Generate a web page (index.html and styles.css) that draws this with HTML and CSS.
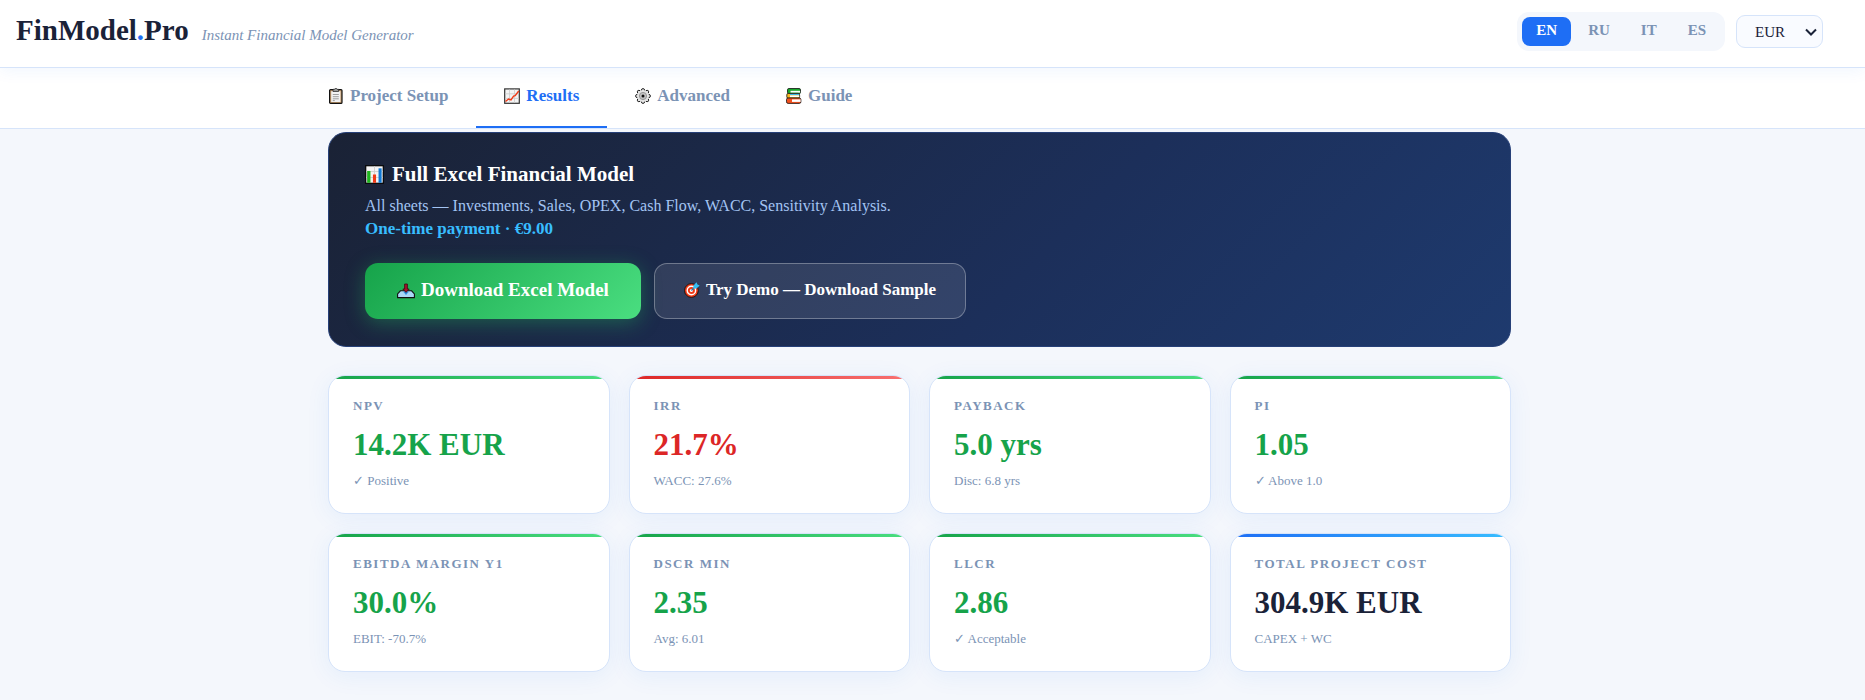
FILE: index.html
```html
<!DOCTYPE html>
<html lang="en">
<head>
    <meta charset="UTF-8">
    <meta name="viewport" content="width=device-width, initial-scale=1.0">
    <title>FinModel.Pro</title>
    <link rel="stylesheet" href="styles.css">
</head>
<body>
    <!-- Header -->
    <header class="header">
        <div class="brand">
            <h1 class="logo">FinModel<span>.</span>Pro</h1>
            <p class="tagline">Instant Financial Model Generator</p>
        </div>
        <div class="header-controls">
            <div class="lang-switch">
                <button class="lang-btn active">EN</button>
                <button class="lang-btn">RU</button>
                <button class="lang-btn">IT</button>
                <button class="lang-btn">ES</button>
            </div>
            <div class="currency">
                <select aria-label="Currency">
                    <option>EUR</option>
                    <option>USD</option>
                    <option>GBP</option>
                </select>
                <svg class="chevron" viewBox="0 0 12 8"><path d="M1 1.5l5 5 5-5"/></svg>
            </div>
        </div>
    </header>

    <!-- Tabs -->
    <nav class="tabs">
        <div class="tabs-inner">
            <button class="tab">
                <svg class="icon" viewBox="0 0 16 16">
                    <rect x="1.6" y="1.6" width="12.4" height="13.8" rx="1" fill="#c69c6d" stroke="#111" stroke-width="1.2"/>
                    <rect x="3.2" y="3.2" width="9.2" height="10.8" fill="#f2f2f2"/>
                    <path d="M5 1.3h1.4a1.5 1.5 0 0 1 2.8 0h1.4v2.2H5z" fill="#999" stroke="#222" stroke-width=".7"/>
                    <path d="M4.8 6.5h6M4.8 8.7h6M4.8 10.8h6M4.8 12.6h2" stroke="#888" stroke-width=".8"/>
                </svg>
                Project Setup
            </button>
            <button class="tab active">
                <svg class="icon" viewBox="0 0 16 16">
                    <rect x=".7" y=".9" width="14.6" height="14.4" fill="#f4f4f4" stroke="#333" stroke-width="1.2"/>
                    <path d="M1 5.8h14M1 10.4h14M5.5 1.5v13.4M10.5 1.5v13.4" stroke="#ccc" stroke-width=".8"/>
                    <path d="M1.5 13.5L4.5 11l2.5 1 2.6-4 1.6-.4L14.7 3" fill="none" stroke="#f03a17" stroke-width="1.4"/>
                </svg>
                Results
            </button>
            <button class="tab">
                <svg class="icon" viewBox="0 0 16 16">
                    <g fill="#e4e4e4" stroke="#222" stroke-width="1">
                        <circle cx="8" cy="2.2" r="1.6"/>
                        <circle cx="12.1" cy="3.9" r="1.6"/>
                        <circle cx="13.8" cy="8" r="1.6"/>
                        <circle cx="12.1" cy="12.1" r="1.6"/>
                        <circle cx="8" cy="13.8" r="1.6"/>
                        <circle cx="3.9" cy="12.1" r="1.6"/>
                        <circle cx="2.2" cy="8" r="1.6"/>
                        <circle cx="3.9" cy="3.9" r="1.6"/>
                    </g>
                    <circle cx="8" cy="8" r="6" fill="#e4e4e4"/>
                    <circle cx="8" cy="8" r="3.6" fill="#c4c4c4" stroke="#888" stroke-width=".8"/>
                    <circle cx="8" cy="8" r="1.5" fill="#111"/>
                </svg>
                Advanced
            </button>
            <button class="tab">
                <svg class="icon" viewBox="0 0 16 16">
                    <rect x="1.5" y=".5" width="13" height="5.2" rx="1.4" fill="#16a82a" stroke="#111" stroke-width=".8"/>
                    <path d="M4.5 2.8h9.6v1.8H4.5z" fill="#fff"/>
                    <rect x=".8" y="5.4" width="12.8" height="4.8" rx="1.4" fill="#f7b824" stroke="#111" stroke-width=".8"/>
                    <path d="M4 5.9h9.2v1.2H4z" fill="#36b7e8"/>
                    <path d="M4 7.4h9.2v1.7H4z" fill="#fff"/>
                    <rect x=".5" y="10" width="14.4" height="5.4" rx="1.6" fill="#f4511e" stroke="#111" stroke-width=".8"/>
                    <path d="M6 11.4h8.6v2.5H6z" fill="#fff"/>
                </svg>
                Guide
            </button>
        </div>
    </nav>

    <main class="container">
        <!-- Download banner -->
        <section class="banner">
            <h2 class="banner-title">
                <svg class="icon icon-lg" viewBox="0 0 16 16">
                    <rect x=".6" y=".6" width="14.8" height="14.8" fill="#f4f4f4" stroke="#000" stroke-width="1"/>
                    <path d="M1 5.5h14M1 10.5h14M8 1v14" stroke="#ccc" stroke-width=".7"/>
                    <path d="M1.8 5h2.8v10H1.8z" fill="#1fb51f"/>
                    <path d="M6.7 8h2.6v7H6.7z" fill="#f03a17"/>
                    <path d="M11.4 2.8h2.6V15h-2.6z" fill="#0f78d4"/>
                </svg>
                Full Excel Financial Model
            </h2>
            <p class="banner-text">All sheets — Investments, Sales, OPEX, Cash Flow, WACC, Sensitivity Analysis.<br><strong>One-time payment · €9.00</strong></p>
            <div class="banner-actions">
                <button class="btn btn-download">
                    <svg class="icon icon-md" viewBox="0 0 18 18">
                        <path d="M3.4 9.8h11.2l2.8 3.2v3.6H.6V13z" fill="#a9d8f7" stroke="#111" stroke-width="1.1"/>
                        <path d="M6 10.4h6L9 14z" fill="#2f8fe6"/>
                        <path d="M7.6 3h2.8v5h1.8L9 11.4 5.8 8h1.8z" fill="#a3122a" stroke="#3a0710" stroke-width=".8"/>
                    </svg>
                    Download Excel Model
                </button>
                <button class="btn btn-demo">
                    <svg class="icon" viewBox="0 0 16 16">
                        <circle cx="7.4" cy="8.5" r="6.9" fill="#f03a17" stroke="#111" stroke-width=".9"/>
                        <circle cx="7.4" cy="8.5" r="4.2" fill="#f03a17" stroke="#fff" stroke-width="1.4"/>
                        <circle cx="7.4" cy="8.5" r="1.5" fill="#fff"/>
                        <path d="M7.4 8.5l4-4" stroke="#1a7db0" stroke-width="1.2"/>
                        <path d="M9.4 6.6V3.4L12.6.3l.8 2.3 2.3.8-3.1 3.2z" fill="#35bdf2"/>
                    </svg>
                    Try Demo — Download Sample
                </button>
            </div>
        </section>

        <!-- Key metrics -->
        <section class="kpi-grid">
            <div class="kpi good">
                <div class="kpi-label">NPV</div>
                <div class="kpi-value">14.2K EUR</div>
                <div class="kpi-sub">✓ Positive</div>
            </div>
            <div class="kpi bad">
                <div class="kpi-label">IRR</div>
                <div class="kpi-value">21.7%</div>
                <div class="kpi-sub">WACC: 27.6%</div>
            </div>
            <div class="kpi good">
                <div class="kpi-label">Payback</div>
                <div class="kpi-value">5.0 yrs</div>
                <div class="kpi-sub">Disc: 6.8 yrs</div>
            </div>
            <div class="kpi good">
                <div class="kpi-label">PI</div>
                <div class="kpi-value">1.05</div>
                <div class="kpi-sub">✓ Above 1.0</div>
            </div>
            <div class="kpi good">
                <div class="kpi-label">EBITDA Margin Y1</div>
                <div class="kpi-value">30.0%</div>
                <div class="kpi-sub">EBIT: -70.7%</div>
            </div>
            <div class="kpi good">
                <div class="kpi-label">DSCR Min</div>
                <div class="kpi-value">2.35</div>
                <div class="kpi-sub">Avg: 6.01</div>
            </div>
            <div class="kpi good">
                <div class="kpi-label">LLCR</div>
                <div class="kpi-value">2.86</div>
                <div class="kpi-sub">✓ Acceptable</div>
            </div>
            <div class="kpi">
                <div class="kpi-label">Total Project Cost</div>
                <div class="kpi-value">304.9K EUR</div>
                <div class="kpi-sub">CAPEX + WC</div>
            </div>
        </section>
    </main>
</body>
</html>
```
FILE: styles.css
```css
* {
    margin: 0;
    padding: 0;
    box-sizing: border-box;
}

:root {
    --blue: #1e6ef5;
    --sky: #38bdff;
    --green: #16a34a;
    --red: #dc2626;
    --dark: #1a2238;
    --muted: #7b93b5;
    --border: #d6e4fa;
    --bg: #f4f7fc;
}

body {
    font-family: Georgia, "Liberation Serif", serif;
    background: var(--bg);
    color: var(--dark);
}

button,
select {
    font-family: inherit;
    cursor: pointer;
}

/* Header */
.header {
    position: relative;
    display: flex;
    justify-content: space-between;
    align-items: center;
    height: 68px;
    padding: 0 42px 4px 16px;
    background: #fff;
    border-bottom: 1px solid var(--border);
    box-shadow: 0 2px 16px rgba(30, 110, 245, 0.07);
}

.brand {
    display: flex;
    align-items: baseline;
    gap: 13px;
    padding-bottom: 3px;
}

.logo {
    font-size: 29px;
    line-height: 36px;
}

.logo span {
    color: var(--blue);
}

.tagline {
    font-size: 15px;
    font-style: italic;
    color: var(--muted);
}

.header-controls {
    display: flex;
    align-items: center;
    gap: 11px;
}

.lang-switch {
    display: flex;
    gap: 3px;
    padding: 5px;
    background: var(--bg);
    border-radius: 12px;
}

.lang-btn {
    height: 29px;
    padding: 0 14px 2px;
    border: none;
    border-radius: 8px;
    background: none;
    font-size: 15px;
    font-weight: bold;
    color: var(--muted);
}

.lang-btn.active {
    background: var(--blue);
    color: #fff;
}

.currency {
    position: relative;
}

.currency select {
    display: block;
    width: 87px;
    height: 33px;
    padding: 0 18px;
    appearance: none;
    border: 1px solid var(--border);
    border-radius: 9px;
    background: #f9fbff;
    font-size: 15px;
    color: var(--dark);
}

.chevron {
    position: absolute;
    top: 13px;
    right: 6px;
    width: 12px;
    height: 8px;
    fill: none;
    stroke: var(--dark);
    stroke-width: 2;
    pointer-events: none;
}

/* Tabs */
.tabs {
    height: 61px;
    padding-right: 26px;
    border-bottom: 1px solid var(--border);
    background: #fff;
}

.tabs-inner {
    display: flex;
    max-width: 1239px;
    height: 60px;
    margin: 0 auto;
}

.tab {
    display: flex;
    align-items: center;
    gap: 6px;
    padding: 0 28px 2px;
    border: none;
    border-bottom: 2px solid transparent;
    background: none;
    font-size: 17px;
    font-weight: bold;
    color: var(--muted);
}

.tab.active {
    border-bottom-color: var(--blue);
    color: var(--blue);
}

.icon {
    flex: none;
    width: 16px;
    height: 16px;
}

.icon-md {
    width: 18px;
    height: 18px;
}

.icon-lg {
    width: 19px;
    height: 19px;
}

/* Page content */
.container {
    padding: 3px 26px 24px 0;
}

.banner,
.kpi-grid {
    max-width: 1183px;
    margin: 0 auto;
}

.banner {
    padding: 27px 36px;
    border: 1px solid #264078;
    border-radius: 18px;
    background: linear-gradient(135deg, #1a2235 0%, #1c2f5a 60%, #1e3a6e 100%);
}

.banner-title {
    display: flex;
    align-items: center;
    gap: 8px;
    margin-bottom: 6px;
    font-size: 21px;
    line-height: 28px;
    color: #fff;
}

.banner-text {
    margin-bottom: 23px;
    font-size: 16px;
    line-height: 23px;
    color: #a3c4f3;
}

.banner-text strong {
    font-size: 17px;
    color: var(--sky);
}

.banner-actions {
    display: flex;
    gap: 13px;
}

.btn {
    display: flex;
    align-items: center;
    gap: 6px;
    height: 56px;
    border: none;
    border-radius: 13px;
    font-weight: bold;
    color: #fff;
}

.btn-download {
    padding: 0 32px 2px;
    background: linear-gradient(135deg, #16a34a, #4ade80);
    box-shadow: 0 4px 20px rgba(34, 197, 94, 0.35);
    font-size: 19px;
}

.btn-demo {
    padding: 0 29px 2px;
    border: 1px solid rgba(255, 255, 255, 0.3);
    background: rgba(255, 255, 255, 0.1);
    font-size: 17px;
}

/* KPI cards */
.kpi-grid {
    display: grid;
    grid-template-columns: repeat(4, 1fr);
    gap: 19px;
    margin-top: 28px;
}

.kpi {
    position: relative;
    overflow: hidden;
    padding: 20px 24px 22px;
    border: 1px solid var(--border);
    border-radius: 17px;
    background: #fff;
    box-shadow: 0 4px 24px rgba(30, 110, 245, 0.07);
}

/* Coloured strip on top of the card */
.kpi::before {
    content: "";
    position: absolute;
    top: 0;
    left: 0;
    right: 0;
    height: 3px;
    background: linear-gradient(90deg, var(--blue), var(--sky));
}

.kpi.good::before {
    background: linear-gradient(90deg, var(--green), #4ade80);
}

.kpi.bad::before {
    background: linear-gradient(90deg, var(--red), #f87171);
}

.kpi-label {
    font-size: 13px;
    font-weight: bold;
    line-height: 20px;
    letter-spacing: 1.5px;
    text-transform: uppercase;
    color: var(--muted);
}

.kpi-value {
    margin: 11px 0 8px;
    font-size: 31px;
    font-weight: bold;
    line-height: 36px;
}

.kpi.good .kpi-value {
    color: var(--green);
}

.kpi.bad .kpi-value {
    color: var(--red);
}

.kpi-sub {
    font-size: 13px;
    line-height: 20px;
    color: var(--muted);
}
```
